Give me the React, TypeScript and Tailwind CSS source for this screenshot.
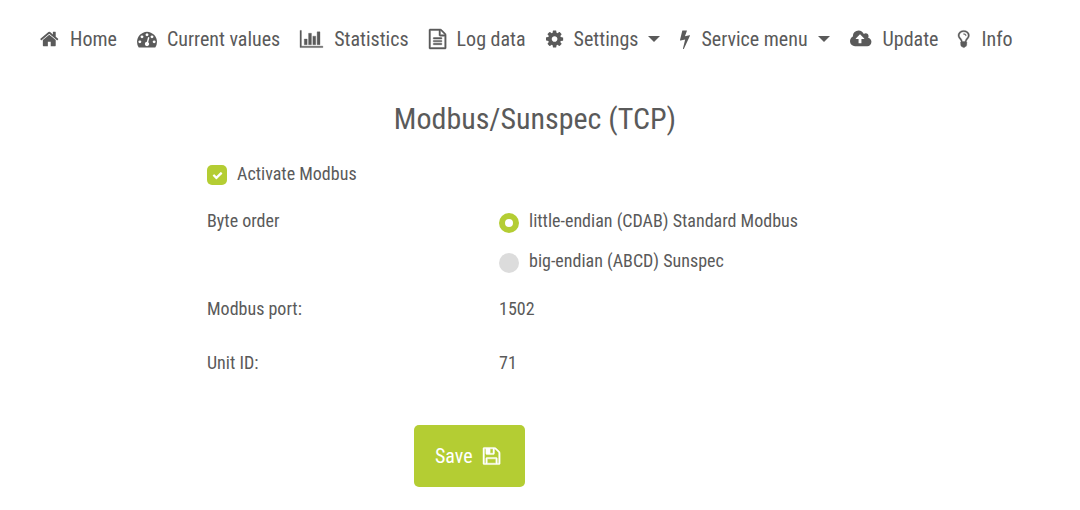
import { useState, type ReactNode } from "react";

type IconProps = { box: string; d: string; className: string };

function Icon({ box, d, className }: IconProps) {
  return (
    <svg viewBox={box} preserveAspectRatio="xMinYMid meet" className={`shrink-0 overflow-visible fill-current ${className}`} aria-hidden="true">
      <path d={d} />
    </svg>
  );
}

const paths = {
  home: "M1472 992v480q0 26-19 45t-45 19h-384v-384h-256v384h-384q-26 0-45-19t-19-45v-480q0-1 .5-3t.5-3l575-474 575 474q1 2 1 6zm223-69l-62 74q-8 9-21 11h-3q-13 0-21-7l-692-577-692 577q-12 8-24 7-13-2-21-11l-62-74q-8-10-7-23.5t11-21.5l719-599q32-26 76-26t76 26l244 204v-195q0-14 9-23t23-9h192q14 0 23 9t9 23v408l219 182q10 8 11 21.5t-7 23.5z",
  gauge:
    "M384 1152q0-53-37.5-90.5t-90.5-37.5-90.5 37.5-37.5 90.5 37.5 90.5 90.5 37.5 90.5-37.5 37.5-90.5zm192-448q0-53-37.5-90.5t-90.5-37.5-90.5 37.5-37.5 90.5 37.5 90.5 90.5 37.5 90.5-37.5 37.5-90.5zm428 481l101-382q6-26-7.5-48.5t-38.5-29.5-48 6.5-30 39.5l-101 382q-60 5-107 43.5t-63 98.5q-20 77 20 146t117 89 146-20 89-117q16-60-6-117t-72-91zm660-33q0-53-37.5-90.5t-90.5-37.5-90.5 37.5-37.5 90.5 37.5 90.5 90.5 37.5 90.5-37.5 37.5-90.5zm-640-640q0-53-37.5-90.5t-90.5-37.5-90.5 37.5-37.5 90.5 37.5 90.5 90.5 37.5 90.5-37.5 37.5-90.5zm448 192q0-53-37.5-90.5t-90.5-37.5-90.5 37.5-37.5 90.5 37.5 90.5 90.5 37.5 90.5-37.5 37.5-90.5zm320 448q0 261-141 483-19 29-54 29h-1402q-35 0-54-29-141-221-141-483 0-182 71-348t191-286 286-191 348-71 348 71 286 191 191 286 71 348z",
  chart:
    "M640 896v512h-256v-512h256zm384-512v1024h-256v-1024h256zm1024 1152v128h-2048v-1536h128v1408h1920zm-640-896v768h-256v-768h256zm384-384v1152h-256v-1152h256z",
  file: "M1596 380q28 28 48 76t20 88v1152q0 40-28 68t-68 28h-1344q-40 0-68-28t-28-68v-1600q0-40 28-68t68-28h896q40 0 88 20t76 48zm-444-244v376h376q-10-29-22-41l-313-313q-12-12-41-22zm384 1528v-1024h-416q-40 0-68-28t-28-68v-416h-768v1536h1280zm-1024-864q0-14 9-23t23-9h704q14 0 23 9t9 23v64q0 14-9 23t-23 9h-704q-14 0-23-9t-9-23v-64zm736 224q14 0 23 9t9 23v64q0 14-9 23t-23 9h-704q-14 0-23-9t-9-23v-64q0-14 9-23t23-9h704zm0 256q14 0 23 9t9 23v64q0 14-9 23t-23 9h-704q-14 0-23-9t-9-23v-64q0-14 9-23t23-9h704z",
  cog: "M1152 896q0-106-75-181t-181-75-181 75-75 181 75 181 181 75 181-75 75-181zm512-109v222q0 12-8 23t-20 13l-185 28q-19 54-39 91 35 50 107 138 10 12 10 25t-9 23q-27 37-99 108t-94 71q-12 0-26-9l-138-108q-44 23-91 38-16 136-29 186-7 28-36 28h-222q-14 0-24.5-8.5t-11.5-21.5l-28-184q-49-16-90-37l-141 107q-10 9-25 9-14 0-25-11-126-114-165-168-7-10-7-23 0-12 8-23 15-21 51-66.5t54-70.5q-27-50-41-99l-183-27q-13-2-21-12.5t-8-23.5v-222q0-12 8-23t19-13l186-28q14-46 39-92-40-57-107-138-10-12-10-24 0-10 9-23 26-36 98.5-107.5t94.5-71.5q13 0 26 10l138 107q44-23 91-38 16-136 29-186 7-28 36-28h222q14 0 24.5 8.5t11.5 21.5l28 184q49 16 90 37l142-107q9-9 24-9 13 0 25 10 129 119 165 170 7 8 7 22 0 12-8 23-15 21-51 66.5t-54 70.5q26 50 41 98l183 28q13 2 21 12.5t8 23.5z",
  bolt: "M1333 566q18 20 7 44l-540 1157q-13 25-42 25-4 0-14-2-17-5-25.5-19t-4.5-30l197-808-406 101q-4 1-12 1-18 0-31-11-18-15-13-39l201-825q4-14 16-23t28-9h328q19 0 32 12.5t13 29.5q0 8-5 18l-171 463 396-98q8-2 12-2 19 0 34 15z",
  cloud:
    "M1280 864q0-14-9-23l-352-352q-9-9-23-9t-23 9l-351 351q-10 12-10 24 0 14 9 23t23 9h224v352q0 13 9.5 22.5t22.5 9.5h192q13 0 22.5-9.5t9.5-22.5v-352h224q13 0 22.5-9.5t9.5-22.5zm640 288q0 159-112.5 271.5t-271.5 112.5h-1088q-185 0-316.5-131.5t-131.5-316.5q0-130 70-240t188-165q-2-30-2-43 0-212 150-362t362-150q156 0 285.5 87t188.5 231q71-62 166-62 106 0 181 75t75 181q0 76-41 138 130 31 213.5 135.5t83.5 238.5z",
  bulb: "M1120 576q0 13-9.5 22.5t-22.5 9.5-22.5-9.5-9.5-22.5q0-46-54-71t-106-25q-13 0-22.5-9.5t-9.5-22.5 9.5-22.5 22.5-9.5q50 0 99.5 16t87 54 37.5 90zm160 0q0-72-34.5-134t-90-101.5-123-62-136.5-22.5-136.5 22.5-123 62-90 101.5-34.5 134q0 101 68 180 10 11 30.5 33t30.5 33q128 153 141 298h228q13-145 141-298 10-11 30.5-33t30.5-33q68-79 68-180zm128 0q0 155-103 268-45 49-74.5 87t-59.5 95.5-34 107.5q47 28 47 82 0 37-25 64 25 27 25 64 0 52-45 81 13 23 13 47 0 46-31.5 71t-77.5 25q-20 44-60 70t-87 26-87-26-60-70q-46 0-77.5-25t-31.5-71q0-24 13-47-45-29-45-81 0-37 25-64-25-27-25-64 0-54 47-82-4-50-34-107.5t-59.5-95.5-74.5-87q-103-113-103-268 0-99 44.5-184.5t117-142 164-89 186.5-32.5 186.5 32.5 164 89 117 142 44.5 184.5z",
  floppy:
    "M512 1536h768v-384h-768v384zm896 0h128v-896q0-14-10-38.5t-20-34.5l-281-281q-10-10-34-20t-39-10v416q0 40-28 68t-68 28h-576q-40 0-68-28t-28-68v-416h-128v1280h128v-416q0-40 28-68t68-28h832q40 0 68 28t28 68v416zm-384-928v-320q0-13-9.5-22.5t-22.5-9.5h-192q-13 0-22.5 9.5t-9.5 22.5v320q0 13 9.5 22.5t22.5 9.5h192q13 0 22.5-9.5t9.5-22.5zm640 32v928q0 40-28 68t-68 28h-1344q-40 0-68-28t-28-68v-1344q0-40 28-68t68-28h928q40 0 88 20t76 48l280 280q28 28 48 76t20 88z",
  check:
    "M1671 566q0 40-28 68l-724 724-136 136q-28 28-68 28t-68-28l-136-136-362-362q-28-28-28-68t28-68l136-136q28-28 68-28t68 28l294 295 656-657q28-28 68-28t68 28l136 136q28 28 28 68z",
};

const navItems = [
  { label: "Home", d: paths.home, box: "64 0 1664 1792", size: "h-5 w-5" },
  { label: "Current values", d: paths.gauge, box: "0 0 1792 1792", size: "h-5 w-5" },
  { label: "Statistics", d: paths.chart, box: "0 0 2048 1792", size: "h-5 w-6 stroke-current stroke-[30]" },
  { label: "Log data", d: paths.file, box: "128 0 1536 1792", size: "h-5 w-[18px] stroke-current stroke-[40]" },
  { label: "Settings", d: paths.cog, box: "128 0 1536 1792", size: "h-5 w-[18px]", menu: true },
  { label: "Service menu", d: paths.bolt, box: "448 0 896 1792", size: "h-5 w-[11px]", menu: true },
  { label: "Update", d: paths.cloud, box: "0 0 1920 1792", size: "h-5 w-[23px]" },
  { label: "Info", d: paths.bulb, box: "384 0 1024 1792", size: "h-5 w-[13px] stroke-current stroke-[30]" },
];

function NavBar() {
  const item = "flex cursor-pointer items-center gap-[10px] whitespace-nowrap";
  return (
    <nav className="px-10 pt-6">
      <ul className="flex gap-5 text-xl leading-[30px]">
        {navItems.map((n) => (
          <li key={n.label}>
            {n.menu ? (
              <button type="button" aria-haspopup="menu" className={item}>
                <Icon box={n.box} d={n.d} className={n.size} />
                {n.label}
                <Icon box="0 0 12 6" d="M0 0h12L6 6z" className="h-[6px] w-3" />
              </button>
            ) : (
              <a href="#" className={item}>
                <Icon box={n.box} d={n.d} className={n.size} />
                {n.label}
              </a>
            )}
          </li>
        ))}
      </ul>
    </nav>
  );
}

function Radio({ checked, onSelect, children }: { checked: boolean; onSelect: () => void; children: ReactNode }) {
  return (
    <label className="flex cursor-pointer gap-[10px]">
      <input
        type="radio"
        name="byte-order"
        checked={checked}
        onChange={onSelect}
        className="mt-[6px] size-5 shrink-0 appearance-none rounded-full bg-[#dcdcdc] checked:border-[6px] checked:border-[#b4cd33] checked:bg-white"
      />
      {children}
    </label>
  );
}

function Field({ id, label, value, onChange }: { id: string; label: string; value: string; onChange: (v: string) => void }) {
  return (
    <div className="grid grid-cols-[292px_1fr]">
      <label htmlFor={id}>{label}</label>
      <input
        id={id}
        value={value}
        onChange={(e) => onChange(e.target.value)}
        className="w-full min-w-0 bg-transparent outline-none"
      />
    </div>
  );
}

export default function App() {
  const [active, setActive] = useState(true);
  const [order, setOrder] = useState("little");
  const [port, setPort] = useState("1502");
  const [unit, setUnit] = useState("71");

  return (
    <div className="bg-white font-['Roboto_Condensed',Roboto,sans-serif] text-[#5a5a5a]">
      <NavBar />
      <main className="pt-[42px] pr-[10px] pb-6">
        <h1 className="text-center text-[30px] leading-[46px]">Modbus/Sunspec (TCP)</h1>
        <form
          onSubmit={(e) => e.preventDefault()}
          className="mx-auto mt-[18px] max-w-[656px] text-lg leading-[28px]"
        >
          <label className="flex w-fit cursor-pointer gap-[10px]">
            <span className="mt-[5px] grid size-5">
              <input
                type="checkbox"
                checked={active}
                onChange={(e) => setActive(e.target.checked)}
                className="col-start-1 row-start-1 size-5 appearance-none rounded-[5px] bg-[#dcdcdc] checked:bg-[#b4cd33]"
              />
              {active && (
                <Icon
                  box="0 0 1792 1792"
                  d={paths.check}
                  className="pointer-events-none col-start-1 row-start-1 size-[11px] place-self-center text-white"
                />
              )}
            </span>
            Activate Modbus
          </label>

          <fieldset className="mt-[19px] grid grid-cols-[292px_1fr]" aria-labelledby="byte-order-label">
            <span id="byte-order-label">Byte order</span>
            <div className="flex flex-col gap-3">
              <Radio checked={order === "little"} onSelect={() => setOrder("little")}>
                little-endian (CDAB) Standard Modbus
              </Radio>
              <Radio checked={order === "big"} onSelect={() => setOrder("big")}>
                big-endian (ABCD) Sunspec
              </Radio>
            </div>
          </fieldset>

          <div className="mt-5 flex flex-col gap-[26px]">
            <Field id="port" label="Modbus port:" value={port} onChange={setPort} />
            <Field id="unit" label="Unit ID:" value={unit} onChange={setUnit} />
          </div>

          <button
            type="submit"
            className="mt-12 ml-[207px] flex cursor-pointer items-center gap-[10px] rounded-[5px] bg-[#b4cd33] py-4 pr-6 pl-[21px] text-xl leading-[30px] text-white"
          >
            Save
            <Icon box="128 0 1536 1792" d={paths.floppy} className="h-5 w-[18px] stroke-current stroke-[40]" />
          </button>
        </form>
      </main>
    </div>
  );
}
